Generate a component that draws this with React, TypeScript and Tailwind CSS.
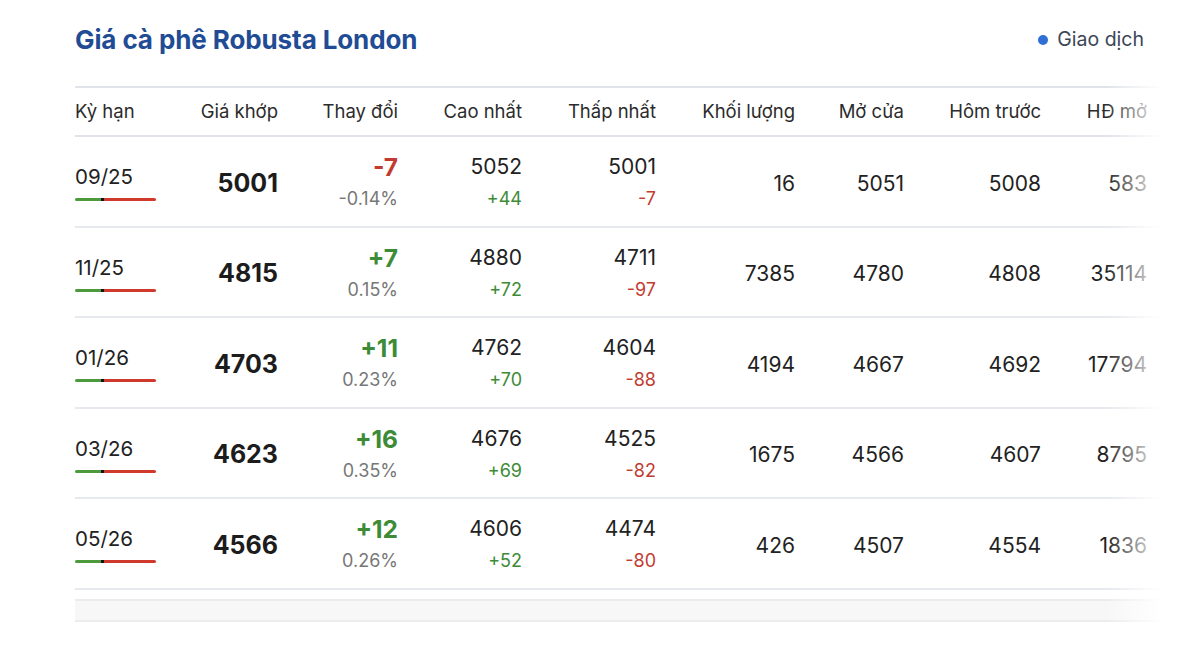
import React from 'react';

type Row = {
  term: string;
  price: number;
  change: number;
  pct: string;
  high: number;
  highDiff: number;
  low: number;
  lowDiff: number;
  volume: number;
  open: number;
  prev: number;
  oi: number;
};

const rows: Row[] = [
  { term: '09/25', price: 5001, change: -7, pct: '-0.14%', high: 5052, highDiff: 44, low: 5001, lowDiff: -7, volume: 16, open: 5051, prev: 5008, oi: 583 },
  { term: '11/25', price: 4815, change: 7, pct: '0.15%', high: 4880, highDiff: 72, low: 4711, lowDiff: -97, volume: 7385, open: 4780, prev: 4808, oi: 35114 },
  { term: '01/26', price: 4703, change: 11, pct: '0.23%', high: 4762, highDiff: 70, low: 4604, lowDiff: -88, volume: 4194, open: 4667, prev: 4692, oi: 17794 },
  { term: '03/26', price: 4623, change: 16, pct: '0.35%', high: 4676, highDiff: 69, low: 4525, lowDiff: -82, volume: 1675, open: 4566, prev: 4607, oi: 8795 },
  { term: '05/26', price: 4566, change: 12, pct: '0.26%', high: 4606, highDiff: 52, low: 4474, lowDiff: -80, volume: 426, open: 4507, prev: 4554, oi: 1836 },
];

const sign = (n: number) => (n > 0 ? `+${n}` : `${n}`);
const tone = (n: number) => (n >= 0 ? 'text-[#3d8b37]' : 'text-[#c23b30]');

const headers = [
  { label: 'Kỳ hạn', w: 'w-[103px] text-left' },
  { label: 'Giá khớp', w: 'w-[100px] text-right' },
  { label: 'Thay đổi', w: 'w-[120px] text-right' },
  { label: 'Cao nhất', w: 'w-[124px] text-right' },
  { label: 'Thấp nhất', w: 'w-[134px] text-right' },
  { label: 'Khối lượng', w: 'w-[139px] text-right' },
  { label: 'Mở cửa', w: 'w-[109px] text-right' },
  { label: 'Hôm trước', w: 'w-[137px] text-right' },
  { label: 'HĐ mở', w: 'w-[106px] text-right' },
];

function RangeBar() {
  return (
    <div className="flex h-[3px] w-[81px] mt-[9px]">
      <div className="w-[26px] bg-[#4c9a3c] rounded-l-full" />
      <div className="w-[3px] bg-[#111]" />
      <div className="flex-1 bg-[#cf3a2d] rounded-r-full" />
    </div>
  );
}

export default function App() {
  return (
    <div className="min-h-[650px] bg-white font-['Inter',sans-serif] text-[#222]">
      <div className="pl-[75px] pt-[24px]">
        <div className="flex items-center justify-between w-[1069px] h-[32px]">
          <h1 className="text-[26px] leading-[32px] font-bold text-[#1f4c94] tracking-[-0.1px]">Giá cà phê Robusta London</h1>
          <div className="flex items-center gap-[9px] text-[19.5px] text-[#3b4556]">
            <span className="w-[10px] h-[10px] rounded-full bg-[#2f6fd6]" />
            Giao dịch
          </div>
        </div>

        <div className="relative mt-[30px] w-[1087px] overflow-hidden">
          <div className="w-[1200px]">
            <div className="flex items-center h-[51px] border-t-2 border-b-2 border-[#e0e4ea] text-[18.5px] text-[#2b2b2b]">
              {headers.map((h) => (
                <div key={h.label} className={`${h.w} whitespace-nowrap`}>{h.label}</div>
              ))}
            </div>

            {rows.map((r) => (
              <div key={r.term} className="flex items-center h-[90.5px] pt-[4px] border-b-2 border-[#e6e9ee] text-[21px]">
                <div className="w-[103px] flex flex-col">
                  <span className="text-[20.5px] leading-[24px]">{r.term}</span>
                  <RangeBar />
                </div>
                <div className="w-[100px] text-right text-[25px] font-bold text-[#1c1c1c]">{r.price}</div>
                <div className="w-[120px] flex flex-col items-end">
                  <span className={`text-[24.5px] font-bold leading-[28px] ${tone(r.change)}`}>{sign(r.change)}</span>
                  <span className="text-[18px] text-[#777] leading-[28px] mt-[4px]">{r.pct}</span>
                </div>
                <div className="w-[124px] flex flex-col items-end">
                  <span className="leading-[28px]">{r.high}</span>
                  <span className={`text-[18px] leading-[28px] mt-[4px] ${tone(r.highDiff)}`}>{sign(r.highDiff)}</span>
                </div>
                <div className="w-[134px] flex flex-col items-end">
                  <span className="leading-[28px]">{r.low}</span>
                  <span className={`text-[18px] leading-[28px] mt-[4px] ${tone(r.lowDiff)}`}>{sign(r.lowDiff)}</span>
                </div>
                <div className="w-[139px] text-right">{r.volume}</div>
                <div className="w-[109px] text-right">{r.open}</div>
                <div className="w-[137px] text-right">{r.prev}</div>
                <div className="w-[106px] text-right">{r.oi}</div>
              </div>
            ))}

            <div className="mt-[9px] h-[23px] border-t-2 border-b-2 border-[#ececec] bg-[#f7f7f7]" />
          </div>
          <div className="pointer-events-none absolute top-0 right-0 h-full w-[56px] bg-gradient-to-r from-white/0 to-white" />
        </div>
      </div>
    </div>
  );
}
